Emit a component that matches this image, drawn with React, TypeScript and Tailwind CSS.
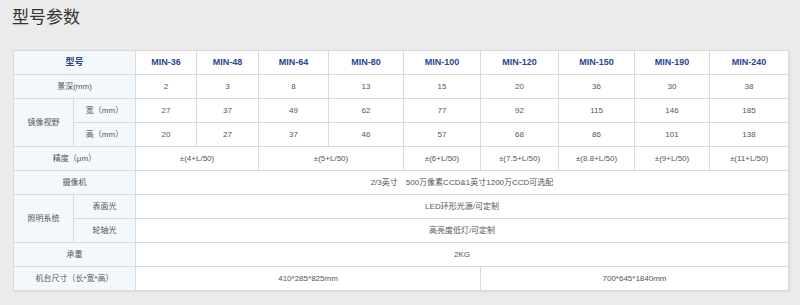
export default function App() {
  const models = ["MIN-36", "MIN-48", "MIN-64", "MIN-80", "MIN-100", "MIN-120", "MIN-150", "MIN-190", "MIN-240"];
  const depth = ["2", "3", "8", "13", "15", "20", "36", "30", "38"];
  const widths = ["27", "37", "49", "62", "77", "92", "115", "146", "185"];
  const heights = ["20", "27", "37", "46", "57", "68", "86", "101", "138"];

  const base = "border border-[#dadada] text-center p-0 h-[24px]";
  const cell = `${base} text-[8px] text-[#555] font-normal`;
  const label = `${cell} bg-[#f3f8fd]`;
  const head = `${base} text-[9px] text-[#2a4590] font-bold`;

  return (
    <div
      className="w-[800px] h-[305px] bg-[#ebebeb] pt-[7px]"
      style={{ fontFamily: '"Liberation Sans", "Noto Sans CJK SC", sans-serif' }}
    >
      <h2 className="ml-[12px] text-[17px] leading-[22px] text-[#333] font-normal">型号参数</h2>
      <table className="ml-[13px] mt-[21px] w-[775px] table-fixed border-collapse bg-white shadow-[1px_1px_2px_rgba(0,0,0,0.08)]">
        <colgroup>
          <col className="w-[60px]" />
          <col className="w-[62px]" />
          <col className="w-[61px]" />
          <col className="w-[62px]" />
          <col className="w-[70px]" />
          <col className="w-[75px]" />
          <col className="w-[77px]" />
          <col className="w-[78px]" />
          <col className="w-[76px]" />
          <col className="w-[75px]" />
          <col className="w-[79px]" />
        </colgroup>
        <tbody>
          <tr>
            <th colSpan={2} className={`${head} bg-[#f3f8fd]`}>型号</th>
            {models.map((m) => (
              <th key={m} className={head}>{m}</th>
            ))}
          </tr>
          <tr>
            <td colSpan={2} className={label}>景深(mm)</td>
            {depth.map((v, i) => (
              <td key={i} className={cell}>{v}</td>
            ))}
          </tr>
          <tr>
            <td rowSpan={2} className={label}>镜像视野</td>
            <td className={label}>宽（mm）</td>
            {widths.map((v, i) => (
              <td key={i} className={cell}>{v}</td>
            ))}
          </tr>
          <tr>
            <td className={label}>高（mm）</td>
            {heights.map((v, i) => (
              <td key={i} className={cell}>{v}</td>
            ))}
          </tr>
          <tr>
            <td colSpan={2} className={label}>精度（μm）</td>
            <td colSpan={2} className={cell}>±(4+L/50)</td>
            <td colSpan={2} className={cell}>±(5+L/50)</td>
            <td className={cell}>±(6+L/50)</td>
            <td className={cell}>±(7.5+L/50)</td>
            <td className={cell}>±(8.8+L/50)</td>
            <td className={cell}>±(9+L/50)</td>
            <td className={cell}>±(11+L/50)</td>
          </tr>
          <tr>
            <td colSpan={2} className={label}>摄像机</td>
            <td colSpan={9} className={cell}>2/3英寸　500万像素CCD&amp;1英寸1200万CCD可选配</td>
          </tr>
          <tr>
            <td rowSpan={2} className={label}>照明系统</td>
            <td className={label}>表面光</td>
            <td colSpan={9} className={cell}>LED环形光源/可定制</td>
          </tr>
          <tr>
            <td className={label}>轮轴光</td>
            <td colSpan={9} className={cell}>高亮度低灯/可定制</td>
          </tr>
          <tr>
            <td colSpan={2} className={label}>承重</td>
            <td colSpan={9} className={cell}>2KG</td>
          </tr>
          <tr>
            <td colSpan={2} className={label}>机台尺寸（长*宽*高）</td>
            <td colSpan={5} className={cell}>410*285*825mm</td>
            <td colSpan={4} className={cell}>700*645*1840mm</td>
          </tr>
        </tbody>
      </table>
    </div>
  );
}
